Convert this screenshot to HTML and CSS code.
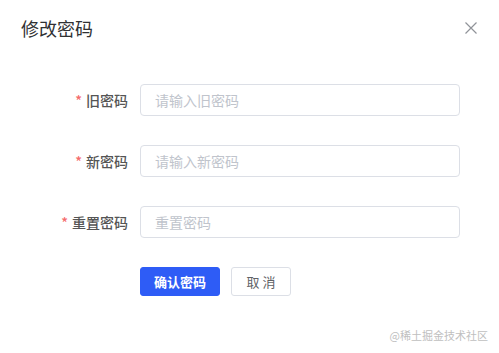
FILE: index.html
```html
<!DOCTYPE html>
<html lang="zh">
<head>
    <meta charset="UTF-8">
    <meta name="viewport" content="width=device-width, initial-scale=1.0">
    <title>修改密码</title>
    <link rel="stylesheet" href="styles.css">
</head>
<body>
    <div class="dialog">
        <header class="dialog-header">
            <span class="dialog-title">修改密码</span>
            <button class="dialog-close" aria-label="关闭">
                <svg width="12" height="12" viewBox="0 0 12 12">
                    <path d="M0.5 0.5 L11.5 11.5 M11.5 0.5 L0.5 11.5" stroke="#909399" stroke-width="1.2" fill="none"/>
                </svg>
            </button>
        </header>
        <form class="form">
            <div class="form-item">
                <label class="form-label"><span class="required">*</span>旧密码</label>
                <input class="form-input" type="password" placeholder="请输入旧密码">
            </div>
            <div class="form-item">
                <label class="form-label"><span class="required">*</span>新密码</label>
                <input class="form-input" type="password" placeholder="请输入新密码">
            </div>
            <div class="form-item">
                <label class="form-label"><span class="required">*</span>重置密码</label>
                <input class="form-input" type="password" placeholder="重置密码">
            </div>
            <div class="form-actions">
                <button type="button" class="btn btn-primary">确认密码</button>
                <button type="button" class="btn btn-default">取 消</button>
            </div>
        </form>
        <div class="watermark">@稀土掘金技术社区</div>
    </div>
</body>
</html>
```

FILE: styles.css
```css
body {
    margin: 0;
    background-color: #fff;
    font-family: "Noto Sans CJK SC", "Liberation Sans", sans-serif;
}
.dialog {
    position: relative;
    width: 499px;
    height: 353px;
    box-sizing: border-box;
}
.dialog-header {
    display: flex;
    justify-content: space-between;
    align-items: center;
    padding: 16px 21px 0 21px;
    height: 24px;
}
.dialog-title {
    font-size: 18px;
    line-height: 24px;
    color: #303133;
}
.dialog-close {
    border: none;
    background: none;
    padding: 0;
    margin-right: 1px;
    width: 12px;
    height: 12px;
    display: flex;
    cursor: pointer;
}
.form {
    padding-top: 44px;
}
.form-item {
    display: flex;
    align-items: center;
    margin-bottom: 29px;
}
.form-label {
    width: 128px;
    padding-right: 12px;
    text-align: right;
    font-size: 14px;
    color: #555;
    font-weight: 500;
}
.required {
    color: #f56c6c;
    margin-right: 4px;
}
.form-input {
    width: 320px;
    height: 32px;
    box-sizing: border-box;
    border: 1px solid #dcdfe6;
    border-radius: 4px;
    padding: 0 14px;
    font-size: 14px;
    font-family: inherit;
    color: #606266;
    outline: none;
}
.form-input::placeholder {
    color: #c0c4cc;
}
.form-actions {
    display: flex;
    gap: 11px;
    padding-left: 140px;
    margin-top: 1px;
}
.btn {
    height: 29px;
    border-radius: 3px;
    font-size: 13px;
    font-family: inherit;
    cursor: pointer;
}
.btn-primary {
    width: 80px;
    border: 1px solid #2e5cf6;
    background-color: #2e5cf6;
    color: #fff;
    font-weight: bold;
}
.btn-default {
    width: 60px;
    border: 1px solid #dcdfe6;
    background-color: #fff;
    color: #606266;
}
.watermark {
    position: absolute;
    right: 11px;
    bottom: 10px;
    font-size: 11px;
    color: #c0c0c0;
}
```
